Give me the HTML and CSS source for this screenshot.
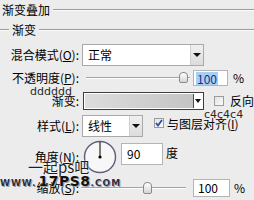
FILE: index.html
```html
<!DOCTYPE html>
<html>
<head>
<meta charset="utf-8">
<link rel="stylesheet" href="styles.css">
</head>
<body>
<div class="panel">
  <div class="title"><span>渐变叠加</span><i class="rule"></i></div>
  <div class="group"><i class="rule short"></i><span>渐变</span><i class="rule"></i></div>

  <div class="row r-blend">
    <span class="lbl">混合模式(<u>O</u>):</span>
    <div class="select wide"><span class="val">正常</span><b class="btn"><i class="tri"></i></b></div>
  </div>

  <div class="row r-opacity">
    <span class="lbl">不透明度(<u>P</u>):</span>
    <div class="slider s-op"><i class="track"></i><i class="thumb"></i></div>
    <div class="num n-op"><span class="hl">100</span></div>
    <span class="unit">%</span>
  </div>

  <div class="row r-grad">
    <span class="note n1">dddddd</span>
    <span class="lbl">渐变:</span>
    <div class="gradbox"><i class="fill"></i><b class="gbtn"><i class="tri small"></i></b></div>
    <i class="cb cb-rev"></i><span class="cbtext t-rev">反向</span>
    <span class="note n2">c4c4c4</span>
  </div>

  <div class="row r-style">
    <span class="lbl">样式(<u>L</u>):</span>
    <div class="select narrow"><span class="val">线性</span><b class="btn"><i class="tri"></i></b></div>
    <i class="cb cb-align checked"><svg width="8" height="8" viewBox="0 0 8 8"><path d="M1 4 L3 6.5 L7 1" fill="none" stroke="#2b4fa8" stroke-width="1.8"/></svg></i>
    <span class="cbtext t-align">与图层对齐(<u>I</u>)</span>
  </div>

  <div class="row r-angle">
    <span class="lbl">角度(<u>N</u>):</span>
    <svg class="dial" width="34" height="34" viewBox="0 0 34 34">
      <circle cx="17" cy="17" r="15.5" fill="#f7f7f7" stroke="#5d5f7a" stroke-width="1.4"/>
      <line x1="17" y1="17" x2="17" y2="2" stroke="#000" stroke-width="1"/>
      <circle cx="17" cy="17" r="1.6" fill="#000"/>
    </svg>
    <div class="num n-ang"><span>90</span></div>
    <span class="unit u-deg">度</span>
  </div>

  <div class="row r-scale">
    <span class="lbl">缩放(<u>S</u>):</span>
    <div class="slider s-sc"><i class="track"></i><i class="thumb"></i></div>
    <div class="num n-sc"><span>100</span></div>
    <span class="unit">%</span>
  </div>

  <div class="wm">
    <div class="wm1">一起ps吧</div>
    <div class="wm2"><span class="w">WWW.</span><span class="b">17PS8</span><span class="c">.COM</span></div>
  </div>
</div>
</body>
</html>
```

FILE: styles.css
```css
html, body { margin: 0; padding: 0; background: #ececec; }
.panel {
  position: relative;
  width: 254px;
  height: 200px;
  overflow: hidden;
  background: #ececec;
  font: 12px/1 "Noto Sans CJK SC", sans-serif;
  color: #000;
}
u { text-decoration: underline; text-underline-offset: 1px; }
.rule {
  flex: 1;
  height: 0;
  border-top: 1px solid #9b9b9b;
  border-bottom: 1px solid #fbfbfb;
}
.title { display: flex; align-items: center; height: 20px; padding-left: 2px; }
.title .rule { margin-left: 3px; }
.group { display: flex; align-items: center; height: 19px; }
.group .short { flex: 0 0 9px; margin-right: 3px; }
.group span + .rule { margin-left: 3px; }

.row { display: flex; align-items: center; position: relative; }
.lbl { width: 79px; flex: none; text-align: right; white-space: nowrap; }

.select {
  box-sizing: border-box;
  height: 22px;
  margin-left: 3px;
  border: 1px solid #a9a9a9;
  background: #fff;
  display: flex;
  align-items: center;
}
.select .val { flex: 1; padding-left: 5px; }
.select.wide { width: 122px; }
.select.narrow { width: 61px; }
.btn {
  width: 13px;
  height: 20px;
  box-sizing: border-box;
  border-left: 1px solid #cfcfcf;
  background: linear-gradient(#f0f0f0, #dcdcdc);
  display: flex;
  align-items: center;
  justify-content: center;
}
.tri {
  width: 0; height: 0;
  border-left: 4px solid transparent;
  border-right: 4px solid transparent;
  border-top: 4px solid #111;
}
.tri.small { border-left-width: 3px; border-right-width: 3px; border-top-width: 4px; }

.r-blend { margin-top: 5px; height: 22px; }

.r-opacity { margin-top: 4px; height: 16px; }
.slider { position: relative; height: 16px; }
.track {
  position: absolute; left: 0; right: 0; top: 7px;
  height: 0;
  border-top: 1px solid #a3a3a3;
  border-bottom: 1px solid #fff;
}
.thumb {
  position: absolute; top: 2px;
  width: 9px; height: 11px;
  box-sizing: border-box;
  border: 1px solid #8a8a8a;
  border-radius: 4px 4px 2px 2px;
  background: linear-gradient(#ffffff, #d6d6d6);
}
.s-op { margin-left: 7px; width: 104px; }
.s-op .thumb { left: 93px; }
.num {
  box-sizing: border-box;
  background: #fff;
  border: 1px solid #b4b4b4;
  display: flex;
  align-items: center;
  padding-left: 4px;
}
.n-op { margin-left: 3px; width: 35px; height: 16px; padding-left: 2px; }
.hl { background: #a8cff3; color: #14308a; padding: 0 1px; line-height: 13px; }
.unit { margin-left: 5px; }

.r-grad { margin-top: 6px; height: 18px; }
.note {
  position: absolute;
  font: 11px/1 "DejaVu Sans", sans-serif;
  color: #2a2a2a;
  white-space: nowrap;
}
.n1 { left: 30px; top: -6px; }
.n2 { left: 204px; top: 17px; }
.gradbox {
  box-sizing: border-box;
  margin-left: 4px;
  width: 121px;
  height: 18px;
  border: 1px solid #3d3d3d;
  background: #fff;
  padding: 1px 0 1px 1px;
  display: flex;
}
.fill { flex: 1; background: linear-gradient(to right, #dddddd, #c4c4c4); }
.gbtn {
  width: 10px;
  box-sizing: border-box;
  border-left: 1px solid #4a4a4a;
  background: #fff;
  display: flex;
  align-items: center;
  justify-content: center;
}
.cb {
  flex: none;
  box-sizing: border-box;
  width: 10px; height: 10px;
  border: 1px solid #9c9c9c;
  background: linear-gradient(135deg, #e2e2e2, #fbfbfb);
  display: flex; align-items: center; justify-content: center;
}
.cb-rev { margin-left: 10px; }
.t-rev { margin-left: 6px; }

.r-style { margin-top: 5px; height: 22px; }
.cb-align { margin-left: 11px; align-self: flex-start; margin-top: 3px; }
.t-align { margin-left: 3px; align-self: flex-start; margin-top: 3px; white-space: nowrap; }

.r-angle { margin-top: 3px; height: 34px; }
.dial { margin-left: 4px; flex: none; }
.n-ang { margin-left: 4px; width: 42px; height: 22px; align-self: flex-start; margin-top: 3px; padding-left: 5px; }
.u-deg { margin-left: 3px; align-self: flex-start; margin-top: 7px; }

.r-scale { margin-top: 5px; height: 18px; }
.s-sc { margin-left: 2px; width: 105px; }
.s-sc .thumb { left: 62px; top: 2px; height: 12px; }
.n-sc { margin-left: 7px; width: 37px; height: 18px; padding-left: 4px; }
.r-scale .unit { margin-left: 4px; }

.wm {
  position: absolute;
  left: 0;
  top: 159px;
  pointer-events: none;
}
.wm1 {
  margin-left: 28px;
  font: 15px/1 "Noto Sans CJK SC", sans-serif;
  color: #1e1e2a;
  text-shadow: 0 0 2px #fff, 0 0 1px #fff;
}
.wm2 {
  margin-top: 2px;
  display: flex;
  align-items: flex-end;
  font-family: "DejaVu Sans", sans-serif;
  font-weight: bold;
  color: #2c2c3a;
  text-shadow: 0 0 1px #fff, 1px 1px 0 #9a9a9a;
}
.wm2 .w { font-size: 9px; line-height: 8px; letter-spacing: 1px; }
.wm2 .b { font-size: 14px; line-height: 11px; margin-left: 2px; letter-spacing: 0.5px; color: #111; }
.wm2 .c { font-size: 9px; line-height: 8px; letter-spacing: 1px; }
```
